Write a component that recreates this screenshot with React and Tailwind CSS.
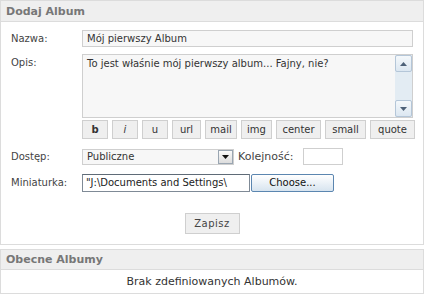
export default function App() {
  const btns = [
    ["b", "w-[26px] font-bold"],
    ["i", "w-[26px] italic"],
    ["u", "w-[26px]"],
    ["url", "w-[29px]"],
    ["mail", "w-[32px]"],
    ["img", "w-[31px]"],
    ["center", "w-[45px]"],
    ["small", "w-[41px]"],
    ["quote", "w-[45px]"],
  ];
  return (
    <div className="w-[426px] h-[295px] bg-white font-['DejaVu_Sans',Verdana,sans-serif] text-[10px] text-[#444] leading-none">
      <div className="w-[424px] h-[245px] border border-[#dcdcdc] flex flex-col">
        <div className="h-[21px] shrink-0 bg-[#efefef] border-b border-[#dcdcdc] pl-[5px] flex items-center font-bold text-[#777] text-[11px]">
          Dodaj Album
        </div>
        <div className="pl-[10px] flex flex-col">
          <div className="mt-[8px] flex items-center h-[17px]">
            <div className="w-[71px]">Nazwa:</div>
            <div className="w-[331px] h-[17px] border border-[#cfcfcf] bg-[#f7f7f7] pl-[4px] flex items-center text-[#333]">
              Mój pierwszy Album
            </div>
          </div>
          <div className="mt-[7px] flex items-start">
            <div className="w-[71px] pt-[4px]">Opis:</div>
            <div className="w-[331px] h-[64px] border border-[#cfcfcf] bg-[#f7f7f7] flex">
              <div className="flex-1 pl-[4px] pt-[4px] text-[#333]">To jest właśnie mój pierwszy album... Fajny, nie?</div>
              <div className="w-[17px] h-full bg-[#e3ecf3] flex flex-col justify-between">
                <div className="h-[17px] border border-[#b4c6d8] rounded-[2px] bg-gradient-to-b from-[#f4f8fb] to-[#dce7f1] flex items-center justify-center">
                  <svg width="7" height="4" viewBox="0 0 7 4"><path d="M3.5 0L7 4H0Z" fill="#4d6178" /></svg>
                </div>
                <div className="h-[17px] border border-[#b4c6d8] rounded-[2px] bg-gradient-to-b from-[#f4f8fb] to-[#dce7f1] flex items-center justify-center">
                  <svg width="7" height="4" viewBox="0 0 7 4"><path d="M0 0H7L3.5 4Z" fill="#4d6178" /></svg>
                </div>
              </div>
            </div>
          </div>
          <div className="mt-[2px] flex">
            <div className="w-[71px]" />
            <div className="flex gap-[4px]">
              {btns.map(([t, c]) => (
                <div key={t} className={`${c} h-[19px] border border-[#cfcfcf] bg-[#efefef] flex items-center justify-center text-[#333]`}>
                  {t}
                </div>
              ))}
            </div>
          </div>
          <div className="mt-[9px] flex items-center h-[17px]">
            <div className="w-[71px]">Dostęp:</div>
            <div className="w-[152px] h-[16px] border border-[#cfcfcf] bg-[#f7f7f7] flex items-center justify-between text-[#333]">
              <span className="pl-[4px]">Publiczne</span>
              <div className="w-[15px] h-[14px] border border-[#9aa6b2] bg-gradient-to-b from-[#fbfbfb] to-[#dcdcdc] flex items-center justify-center">
                <svg width="7" height="4" viewBox="0 0 7 4"><path d="M0 0H7L3.5 4Z" fill="#111" /></svg>
              </div>
            </div>
            <div className="ml-[4px] w-[65px] text-[11px]">Kolejność:</div>
            <div className="w-[40px] h-[17px] border border-[#cfcfcf] bg-white" />
          </div>
          <div className="mt-[9px] flex items-center h-[18px]">
            <div className="w-[71px]">Miniaturka:</div>
            <div className="w-[168px] h-[18px] border border-[#7f8a96] border-t-[#5f6b77] bg-white pl-[3px] flex items-center overflow-hidden whitespace-nowrap text-[#222]">
              "J:\Documents and Settings\
            </div>
            <div className="ml-[1px] w-[83px] h-[18px] border border-[#5b86b0] rounded-[2px] bg-gradient-to-b from-[#ffffff] to-[#d7e4ef] flex items-center justify-center text-[#111]">
              Choose...
            </div>
          </div>
          <div className="mt-[21px] flex justify-center pr-[10px]">
            <div className="w-[55px] h-[21px] border border-[#cfcfcf] bg-[#efefef] flex items-center justify-center text-[#444] tracking-[0.5px]">
              Zapisz
            </div>
          </div>
        </div>
      </div>
      <div className="mt-[4px] w-[424px] h-[45px] border border-[#dcdcdc] flex flex-col">
        <div className="h-[20px] shrink-0 bg-[#efefef] border-b border-[#dcdcdc] pl-[5px] flex items-center font-bold text-[#777] text-[11px]">
          Obecne Albumy
        </div>
        <div className="flex-1 flex items-center justify-center text-[#333] text-[11px]">Brak zdefiniowanych Albumów.</div>
      </div>
    </div>
  );
}
